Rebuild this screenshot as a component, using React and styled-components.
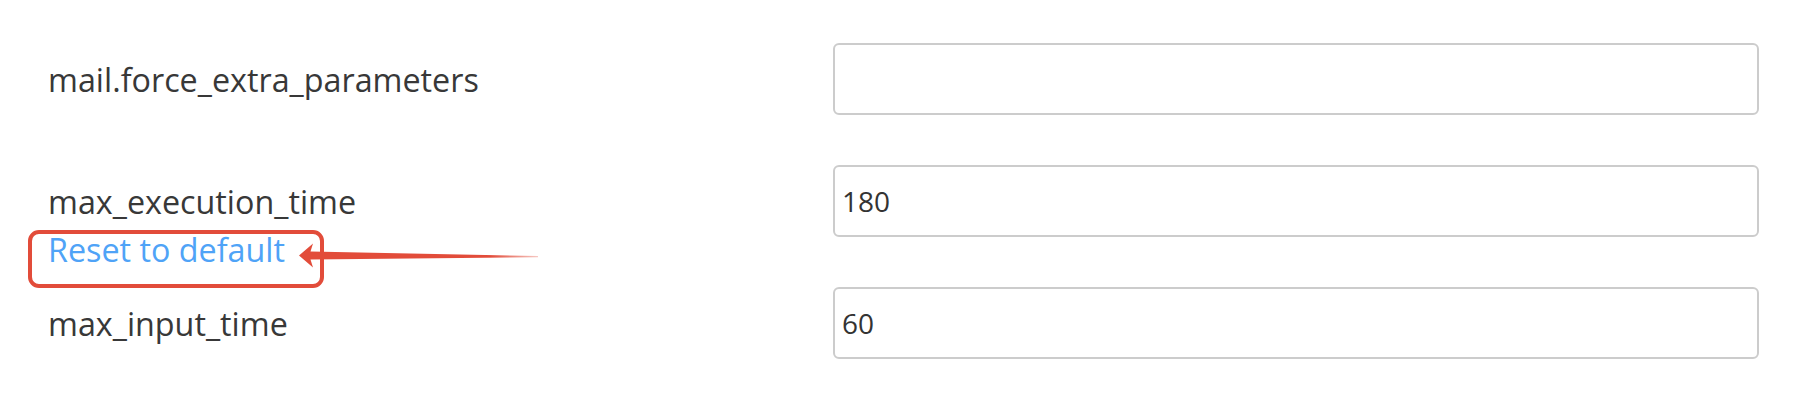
import React from "react";
import styled, { createGlobalStyle } from "styled-components";

const GlobalStyle = createGlobalStyle`
  html, body {
    margin: 0;
    padding: 0;
    background: #ffffff;
  }
  body {
    font-family: "Open Sans", "Liberation Sans", sans-serif;
    color: #383838;
  }
`;

const Form = styled.div`
  display: grid;
  grid-template-columns: 785px 926px;
  grid-auto-rows: 72px;
  row-gap: 50px;
  padding: 43px 38px 0 48px;
  box-sizing: border-box;
  width: 1797px;
`;

const LabelCell = styled.div`
  padding-top: 12px;
  display: flex;
  flex-direction: column;
  align-items: flex-start;
`;

const Label = styled.label`
  font-size: 32.3px;
  line-height: 48px;
  color: #383838;
`;

const LinkWrap = styled.div`
  position: relative;
`;

const ResetLink = styled.a`
  display: block;
  font-size: 32.3px;
  line-height: 48px;
  color: #4fa3f7;
  text-decoration: none;
  cursor: pointer;
`;

const Highlight = styled.div`
  position: absolute;
  left: -20px;
  top: 5px;
  width: 296px;
  height: 58px;
  box-sizing: border-box;
  border: 4px solid #e24c3a;
  border-radius: 11px;
  pointer-events: none;
`;

const Arrow = styled.svg`
  position: absolute;
  left: 251px;
  top: 18px;
  overflow: visible;
  pointer-events: none;
`;

const Input = styled.input`
  box-sizing: border-box;
  width: 100%;
  height: 72px;
  border: 2px solid #cccccc;
  border-radius: 6px;
  padding: 0 7px;
  font-family: "Open Sans", "Liberation Sans", sans-serif;
  font-size: 28px;
  color: #333333;
  background: #ffffff;
  outline: none;
`;

export default function App() {
  return (
    <>
      <GlobalStyle />
      <Form>
        <LabelCell>
          <Label>mail.force_extra_parameters</Label>
        </LabelCell>
        <Input defaultValue="" />

        <LabelCell>
          <Label>max_execution_time</Label>
          <LinkWrap>
            <ResetLink>Reset to default</ResetLink>
            <Highlight />
            <Arrow width="240" height="26" viewBox="0 0 240 26">
              <defs>
                <linearGradient id="fade" x1="0" y1="0" x2="1" y2="0">
                  <stop offset="0" stopColor="#e24c3a" stopOpacity="1" />
                  <stop offset="0.8" stopColor="#e24c3a" stopOpacity="1" />
                  <stop offset="1" stopColor="#e24c3a" stopOpacity="0.3" />
                </linearGradient>
              </defs>
              <path
                d="M0,12.5 L14,0.5 L11.5,8.5 L239,13 L239,14.2 L11.5,16.5 L14,24.5 Z"
                fill="url(#fade)"
              />
            </Arrow>
          </LinkWrap>
        </LabelCell>
        <Input defaultValue="180" />

        <LabelCell>
          <Label>max_input_time</Label>
        </LabelCell>
        <Input defaultValue="60" />
      </Form>
    </>
  );
}
